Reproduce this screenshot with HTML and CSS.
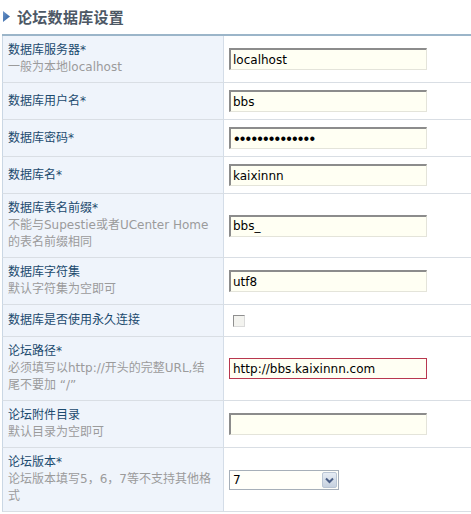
FILE: index.html
```html
<!DOCTYPE html>
<html lang="zh-CN">
<head>
<meta charset="utf-8">
<title>论坛数据库设置</title>
<link rel="stylesheet" href="styles.css">
</head>
<body>
<div class="page">
  <h2 class="title">
    <svg class="title-icon" width="7" height="11" viewBox="0 0 7 11" aria-hidden="true">
      <defs>
        <linearGradient id="tri" x1="0" y1="0" x2="1" y2="1">
          <stop offset="0" stop-color="#6f97cc"/>
          <stop offset="1" stop-color="#2a5c9c"/>
        </linearGradient>
      </defs>
      <polygon points="0,0 7,5.5 0,11" fill="url(#tri)"/>
    </svg>
    <span>论坛数据库设置</span>
  </h2>
  <table class="settings">
    <colgroup><col class="col-label"><col class="col-field"></colgroup>
    <tbody>
      <tr>
        <td class="label"><div class="name">数据库服务器*</div><div class="hint">一般为本地localhost</div></td>
        <td class="field"><input class="text" type="text" value="localhost"></td>
      </tr>
      <tr>
        <td class="label"><div class="name">数据库用户名*</div></td>
        <td class="field"><input class="text" type="text" value="bbs"></td>
      </tr>
      <tr>
        <td class="label"><div class="name">数据库密码*</div></td>
        <td class="field"><input class="text text-password" type="password" value="abcdefghijklmn"></td>
      </tr>
      <tr>
        <td class="label"><div class="name">数据库名*</div></td>
        <td class="field"><input class="text" type="text" value="kaixinnn"></td>
      </tr>
      <tr>
        <td class="label"><div class="name">数据库表名前缀*</div><div class="hint">不能与Supestie或者UCenter Home<br>的表名前缀相同</div></td>
        <td class="field"><input class="text" type="text" value="bbs_"></td>
      </tr>
      <tr>
        <td class="label"><div class="name">数据库字符集</div><div class="hint">默认字符集为空即可</div></td>
        <td class="field"><input class="text" type="text" value="utf8"></td>
      </tr>
      <tr>
        <td class="label"><div class="name">数据库是否使用永久连接</div></td>
        <td class="field"><div class="check-wrap"><input class="check" type="checkbox"></div></td>
      </tr>
      <tr>
        <td class="label"><div class="name">论坛路径*</div><div class="hint">必须填写以http://开头的完整URL,结<br>尾不要加 “/”</div></td>
        <td class="field"><input class="text text-focus" type="text" value="http://bbs.kaixinnn.com"></td>
      </tr>
      <tr>
        <td class="label"><div class="name">论坛附件目录</div><div class="hint">默认目录为空即可</div></td>
        <td class="field"><input class="text" type="text" value=""></td>
      </tr>
      <tr>
        <td class="label"><div class="name">论坛版本*</div><div class="hint">论坛版本填写5，6，7等不支持其他格<br>式</div></td>
        <td class="field">
          <div class="select">
            <select><option>7</option><option>6</option><option>5</option></select>
            <span class="select-btn">
              <svg width="13" height="14" viewBox="0 0 13 14" aria-hidden="true"><polyline points="3,5.5 6.5,9 10,5.5" fill="none" stroke="#4b5f86" stroke-width="2"/></svg>
            </span>
          </div>
        </td>
      </tr>
    </tbody>
  </table>
</div>
</body>
</html>
```
FILE: styles.css
```css
html, body {
  margin: 0;
  padding: 0;
  background: #ffffff;
}
body {
  font-family: "DejaVu Sans", "Noto Sans CJK SC", sans-serif;
  font-size: 12px;
  overflow: hidden;
}
.page {
  padding-left: 2px;
}
.title {
  margin: 0;
  height: 34px;
  padding-bottom: 2px;
  box-sizing: border-box;
  display: flex;
  align-items: center;
  gap: 7px;
  padding-left: 1px;
  font-family: "Noto Sans CJK SC", sans-serif;
  font-size: 15px;
  font-weight: bold;
  color: #4d5865;
  letter-spacing: 0.3px;
}
.title-icon {
  display: block;
  flex: none;
}
.settings {
  width: 100%;
  border-collapse: separate;
  border-spacing: 0;
  table-layout: fixed;
  border-top: 2px solid #9bb5c9;
}
.col-label { width: 222px; }
.settings td {
  border-bottom: 1px solid #d9dee4;
  vertical-align: middle;
}
.label {
  box-sizing: border-box;
  width: 222px;
  background: #eff4fb;
  border-left: 1px solid #cad7e4;
  border-right: 1px solid #d4dde8;
  padding: 6px 5px;
  line-height: 17px;
}
.name {
  color: #1b4a6e;
}
.hint {
  color: #9b9b9b;
}
.field {
  padding: 7px 5px;
}
.text {
  display: block;
  box-sizing: border-box;
  width: 198px;
  height: 22px;
  margin: 0;
  padding: 0 2px;
  font-family: "DejaVu Sans", sans-serif;
  font-size: 12px;
  color: #000;
  background: #fffff3;
  border-style: solid;
  border-width: 2px 1px 1px 2px;
  border-color: #8c8c8c #e4e4da #e4e4da #8c8c8c;
  outline: none;
}
.text-password {
  font-family: "Liberation Sans", sans-serif;
  font-size: 16px;
  letter-spacing: 0.2px;
  padding-left: 3px;
}
.text-focus {
  height: 21px;
  border: 1px solid #b8374f;
  padding: 0 3px;
}
.check-wrap {
  height: 17px;
  display: flex;
  align-items: center;
}
.check {
  appearance: none;
  -webkit-appearance: none;
  margin: 0 0 0 4px;
  width: 12px;
  height: 12px;
  box-sizing: border-box;
  background: #f3f3ef;
  border-style: solid;
  border-width: 1px;
  border-color: #8f8f8f #dadada #dadada #8f8f8f;
}
.select {
  position: relative;
  width: 110px;
  height: 20px;
}
.select select {
  appearance: none;
  -webkit-appearance: none;
  display: block;
  width: 100%;
  height: 100%;
  margin: 0;
  padding: 0 0 0 3px;
  box-sizing: border-box;
  border: 1px solid #a6afb9;
  border-radius: 0;
  background: #fffffa;
  font-family: "DejaVu Sans", sans-serif;
  font-size: 12px;
  color: #000;
  outline: none;
}
.select-btn {
  position: absolute;
  top: 2px;
  right: 2px;
  width: 15px;
  height: 16px;
  box-sizing: border-box;
  border: 1px solid #b9c5d4;
  border-radius: 2px;
  background: linear-gradient(#e6ecf4, #c6d1df);
  display: flex;
  align-items: center;
  justify-content: center;
}
.select-btn svg {
  display: block;
}
```
